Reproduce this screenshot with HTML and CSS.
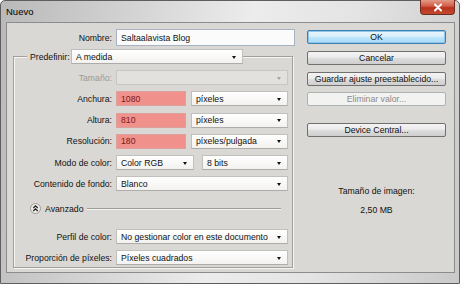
FILE: index.html
```html
<!DOCTYPE html>
<html lang="es">
<head>
    <meta charset="UTF-8">
    <meta name="viewport" content="width=device-width, initial-scale=1.0">
    <title>Nuevo</title>
    <link rel="stylesheet" href="styles.css">
</head>
<body>
    <div class="window">
        <div class="titlebar">
            <span class="title">Nuevo</span>
            <span class="close">
                <svg width="10" height="9" viewBox="0 0 10 9">
                    <path d="M2 1.5 L8 7.5 M8 1.5 L2 7.5" stroke="#fff" stroke-width="2" stroke-linecap="round"/>
                </svg>
            </span>
        </div>

        <div class="client">
            <div class="main">
                <div class="row name-row">
                    <span class="lbl wide">Nombre:</span>
                    <div class="field name">Saltaalavista Blog</div>
                </div>

                <div class="group">
                    <div class="preset">
                        <span class="preset-label">Predefinir:</span>
                        <div class="select preset-select">A medida</div>
                    </div>

                    <div class="row">
                        <span class="lbl off-text">Tamaño:</span>
                        <div class="select full off"></div>
                    </div>
                    <div class="row">
                        <span class="lbl">Anchura:</span>
                        <div class="field pink">1080</div>
                        <div class="select unit">píxeles</div>
                    </div>
                    <div class="row">
                        <span class="lbl">Altura:</span>
                        <div class="field pink">810</div>
                        <div class="select unit">píxeles</div>
                    </div>
                    <div class="row">
                        <span class="lbl">Resolución:</span>
                        <div class="field pink">180</div>
                        <div class="select unit">píxeles/pulgada</div>
                    </div>
                    <div class="row">
                        <span class="lbl">Modo de color:</span>
                        <div class="select mode">Color RGB</div>
                        <div class="select bits">8 bits</div>
                    </div>
                    <div class="row">
                        <span class="lbl">Contenido de fondo:</span>
                        <div class="select full">Blanco</div>
                    </div>

                    <div class="advanced">
                        <span class="toggle">
                            <svg width="11" height="11" viewBox="0 0 11 11">
                                <circle cx="5.5" cy="5.5" r="5" fill="#ecebe9" stroke="#9d9a96"/>
                                <path d="M3.3 5 L5.5 2.9 L7.7 5 M3.3 8 L5.5 5.9 L7.7 8" fill="none" stroke="#222" stroke-width="1.3"/>
                            </svg>
                        </span>
                        <span class="adv-text">Avanzado</span>
                        <span class="rule"></span>
                    </div>

                    <div class="row profile">
                        <span class="lbl">Perfil de color:</span>
                        <div class="select full">No gestionar color en este documento</div>
                    </div>
                    <div class="row">
                        <span class="lbl">Proporción de píxeles:</span>
                        <div class="select full">Píxeles cuadrados</div>
                    </div>
                </div>
            </div>

            <div class="side">
                <div class="btn primary">OK</div>
                <div class="btn">Cancelar</div>
                <div class="btn">Guardar ajuste preestablecido...</div>
                <div class="btn disabled">Eliminar valor...</div>
                <div class="btn device">Device Central...</div>

                <div class="info">
                    <div>Tamaño de imagen:</div>
                    <div>2,50 MB</div>
                </div>
            </div>
        </div>
    </div>
</body>
</html>
```

FILE: styles.css
```css
* {
    box-sizing: border-box;
}

body {
    margin: 0;
    font-family: "Liberation Sans", Arial, sans-serif;
    font-size: 8.7px;
    color: #111;
    background: #ffffff;
}

.window {
    width: 460px;
    height: 284px;
    border: 1px solid #5e5e5e;
    border-radius: 5px 5px 0 0;
    background: linear-gradient(100deg, #b9b9b9 0%, #cfcfcf 22%, #ececec 50%, #e4e4e4 70%, #c9c9c9 100%);
    padding: 0 4px 10px 5px;
    display: flex;
    flex-direction: column;
}

.titlebar {
    height: 21px;
    display: flex;
    justify-content: space-between;
    align-items: flex-start;
}

.title {
    margin-top: 5px;
    color: #000;
    font-size: 9.5px;
}

.close {
    width: 35px;
    height: 15px;
    margin-top: -1px;
    border: 1px solid #6f2b20;
    border-top: none;
    border-radius: 0 0 4px 4px;
    background: linear-gradient(#e39a8a, #cf5a42 45%, #b8311c 55%, #c24a30);
    display: flex;
    justify-content: center;
    align-items: center;
}

.client {
    flex: 1;
    display: flex;
    border: 1px solid #8c8c8c;
    background: #dad8d4;
    padding-top: 6px;
}

.main {
    width: 289px;
}

.row {
    display: flex;
    align-items: center;
    height: 15px;
}

.name-row {
    height: 17px;
}

.lbl {
    width: 102px;
    padding-right: 4px;
    text-align: right;
    white-space: nowrap;
}

.lbl.wide {
    width: 109px;
}

.off-text {
    color: #9b9995;
}

.field,
.select {
    height: 100%;
    display: flex;
    align-items: center;
    padding-left: 4px;
    white-space: nowrap;
}

.field.name {
    width: 179px;
    background: #fbfbfb;
    border: 1px solid #a7b3c2;
}

.field.pink {
    width: 70px;
    background: #f0918c;
    border: 1px solid #dca19d;
    color: #7e1a18;
}

.select {
    position: relative;
    background: linear-gradient(#ffffff, #f3f2f0);
    border: 1px solid #c2c0bc;
    border-bottom-color: #aeaca8;
}

.select::after {
    content: "";
    position: absolute;
    right: 6px;
    top: 50%;
    margin-top: -1px;
    border-left: 2.5px solid transparent;
    border-right: 2.5px solid transparent;
    border-top: 3px solid #111;
}

.select.off {
    background: #e3e1dd;
    border-color: #c9c7c3;
}

.select.off::after {
    border-top-color: #a6a4a0;
}

.full {
    width: 172px;
}

.unit {
    width: 97px;
    margin-left: 5px;
}

.mode {
    width: 78px;
}

.bits {
    width: 86px;
    margin-left: 8px;
}

.group {
    width: 280px;
    margin: 10px 0 0 6px;
    padding-bottom: 2px;
    border: 1px solid #a39f9a;
    box-shadow: inset 1px 1px 0 #f6f5f3, 1px 1px 0 #f6f5f3;
    display: flex;
    flex-direction: column;
    gap: 6.3px;
}

.preset {
    display: flex;
    align-items: center;
    height: 15px;
    margin: -8px 0 -0.3px 13px;
}

.preset-label {
    width: 44px;
    height: 100%;
    padding-left: 3px;
    display: flex;
    align-items: center;
    background: #dad8d4;
}

.preset-select {
    width: 172px;
}

.advanced {
    display: flex;
    align-items: center;
    height: 12px;
    margin-top: 5px;
    padding-left: 16px;
    padding-right: 11px;
}

.toggle {
    display: flex;
}

.adv-text {
    margin-left: 4px;
    margin-right: 4px;
}

.rule {
    flex: 1;
    height: 2px;
    border-top: 1px solid #9f9c97;
    border-bottom: 1px solid #f7f6f4;
}

.profile {
    margin-top: 8px;
}

.side {
    width: 139px;
    margin-left: 11px;
    padding-top: 1px;
    display: flex;
    flex-direction: column;
    gap: 6.8px;
}

.btn {
    height: 14px;
    display: flex;
    justify-content: center;
    align-items: center;
    border: 1px solid #707070;
    border-radius: 2px;
    background: linear-gradient(#f3f3f3, #ebebeb 45%, #dddddd 52%, #cfcfcf);
    color: #111;
    white-space: nowrap;
}

.btn.primary {
    border-color: #3c7fb1;
    background: linear-gradient(#eaf6fd, #d9f0fc 45%, #bee6fd 52%, #a7d9f5);
    box-shadow: 0 0 0 1px #8fc6ea inset;
}

.btn.disabled {
    border-color: #adb2b5;
    background: #f2f2f1;
    color: #8a8a8a;
}

.btn.device {
    margin-top: 10px;
}

.info {
    margin-top: 38px;
    text-align: center;
    line-height: 19px;
    color: #111;
}
```
